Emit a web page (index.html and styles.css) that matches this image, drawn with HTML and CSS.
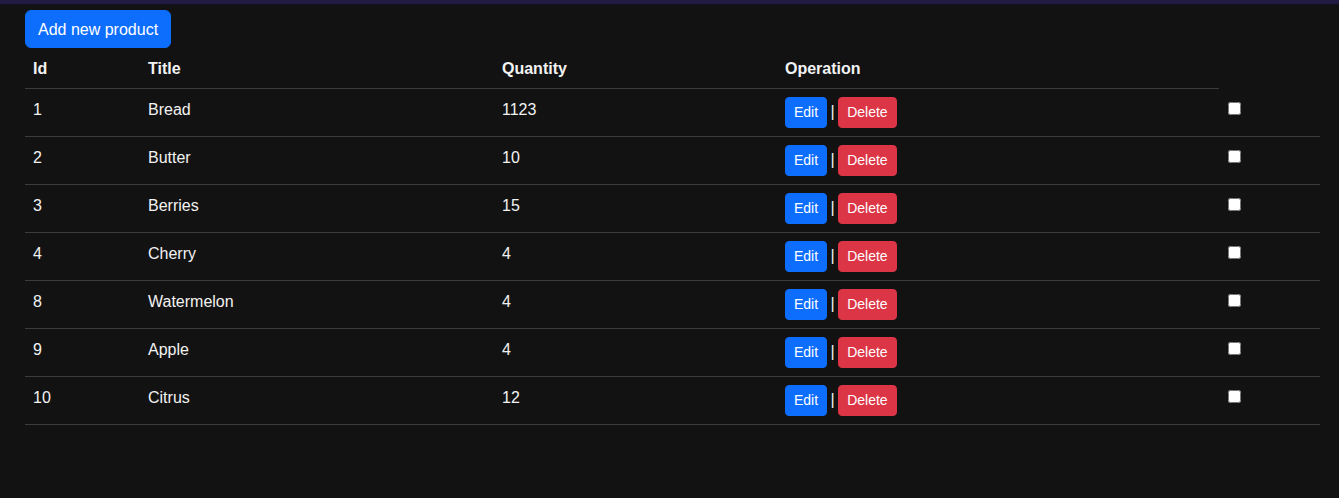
FILE: index.html
```html
<!DOCTYPE html>
<html lang="en">
<head>
<meta charset="utf-8">
<title>Products</title>
<link rel="stylesheet" href="styles.css">
</head>
<body>
<div class="topbar"></div>
<main class="content">
  <button class="btn btn-primary btn-add">Add new product</button>
  <table class="table">
    <thead>
      <tr>
        <th class="c-id">Id</th>
        <th class="c-title">Title</th>
        <th class="c-qty">Quantity</th>
        <th class="c-op">Operation</th>
      </tr>
    </thead>
    <tbody>
      <tr><td>1</td><td>Bread</td><td>1123</td><td class="c-ops"><button class="btn btn-sm btn-primary">Edit</button> | <button class="btn btn-sm btn-danger">Delete</button></td><td class="c-check"><input type="checkbox"></td></tr>
      <tr><td>2</td><td>Butter</td><td>10</td><td class="c-ops"><button class="btn btn-sm btn-primary">Edit</button> | <button class="btn btn-sm btn-danger">Delete</button></td><td class="c-check"><input type="checkbox"></td></tr>
      <tr><td>3</td><td>Berries</td><td>15</td><td class="c-ops"><button class="btn btn-sm btn-primary">Edit</button> | <button class="btn btn-sm btn-danger">Delete</button></td><td class="c-check"><input type="checkbox"></td></tr>
      <tr><td>4</td><td>Cherry</td><td>4</td><td class="c-ops"><button class="btn btn-sm btn-primary">Edit</button> | <button class="btn btn-sm btn-danger">Delete</button></td><td class="c-check"><input type="checkbox"></td></tr>
      <tr><td>8</td><td>Watermelon</td><td>4</td><td class="c-ops"><button class="btn btn-sm btn-primary">Edit</button> | <button class="btn btn-sm btn-danger">Delete</button></td><td class="c-check"><input type="checkbox"></td></tr>
      <tr><td>9</td><td>Apple</td><td>4</td><td class="c-ops"><button class="btn btn-sm btn-primary">Edit</button> | <button class="btn btn-sm btn-danger">Delete</button></td><td class="c-check"><input type="checkbox"></td></tr>
      <tr><td>10</td><td>Citrus</td><td>12</td><td class="c-ops"><button class="btn btn-sm btn-primary">Edit</button> | <button class="btn btn-sm btn-danger">Delete</button></td><td class="c-check"><input type="checkbox"></td></tr>
    </tbody>
  </table>
</main>
</body>
</html>
```
FILE: styles.css
```css
html, body {
  margin: 0;
  padding: 0;
  background: #121212;
  color: #f2f2f2;
  font-family: "Liberation Sans", Arial, sans-serif;
  font-size: 16px;
  line-height: 1.5;
}
.topbar {
  height: 4px;
  background: #211b44;
  border-bottom: 1px solid #130f22;
}
.content {
  padding: 5px 19px 0 25px;
}
.btn {
  display: inline-block;
  font-family: inherit;
  font-size: 16px;
  line-height: 1.5;
  padding: 6px 12px;
  border: 1px solid transparent;
  border-radius: 6px;
  color: #fff;
  cursor: pointer;
  vertical-align: middle;
}
.btn-primary {
  background: #0d6efd;
  border-color: #0d6efd;
}
.btn-danger {
  background: #dc3545;
  border-color: #dc3545;
}
.btn-sm {
  font-size: 14px;
  padding: 4px 8px;
  border-radius: 4px;
}
.btn-add {
  display: block;
  padding: 7px 12px 5px;
}
.table {
  width: 100%;
  border-collapse: collapse;
  vertical-align: top;
}
.table th,
.table td {
  padding: 9px 8px 7px;
  border-bottom: 1px solid #3c3c3c;
  text-align: left;
  vertical-align: top;
}
.table td.c-ops {
  padding: 8px;
  word-spacing: -1px;
}
.table td.c-check {
  padding: 8px;
}
.table th {
  font-weight: bold;
}
.c-id { width: 99px; }
.c-title { width: 338px; }
.c-qty { width: 267px; }
.c-op { width: 426px; }
.c-check input {
  margin: 5px 0 0 1px;
  width: 13px;
  height: 13px;
}
```
